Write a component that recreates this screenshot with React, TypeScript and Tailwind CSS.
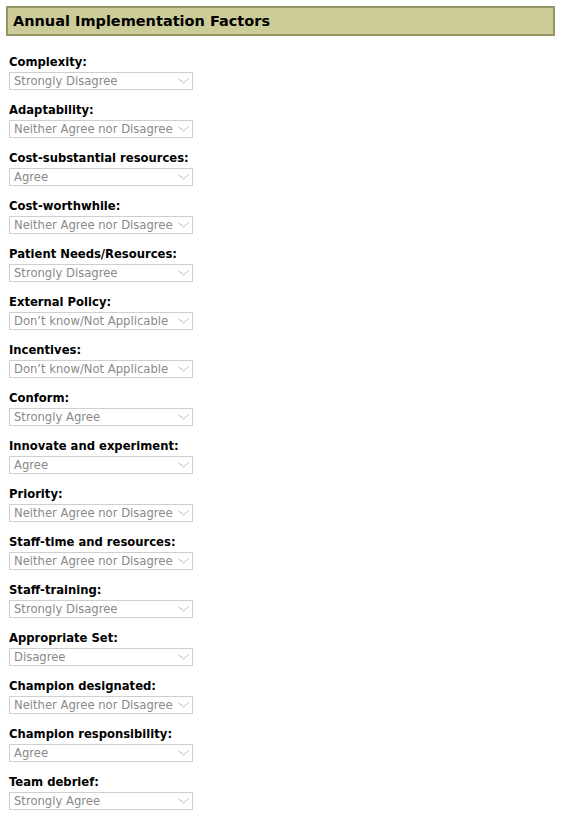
import React from 'react';

const factors = [
  { label: 'Complexity:', value: 'Strongly Disagree' },
  { label: 'Adaptability:', value: 'Neither Agree nor Disagree' },
  { label: 'Cost-substantial resources:', value: 'Agree' },
  { label: 'Cost-worthwhile:', value: 'Neither Agree nor Disagree' },
  { label: 'Patient Needs/Resources:', value: 'Strongly Disagree' },
  { label: 'External Policy:', value: 'Don\u2019t know/Not Applicable' },
  { label: 'Incentives:', value: 'Don\u2019t know/Not Applicable' },
  { label: 'Conform:', value: 'Strongly Agree' },
  { label: 'Innovate and experiment:', value: 'Agree' },
  { label: 'Priority:', value: 'Neither Agree nor Disagree' },
  { label: 'Staff-time and resources:', value: 'Neither Agree nor Disagree' },
  { label: 'Staff-training:', value: 'Strongly Disagree' },
  { label: 'Appropriate Set:', value: 'Disagree' },
  { label: 'Champion designated:', value: 'Neither Agree nor Disagree' },
  { label: 'Champion responsibility:', value: 'Agree' },
  { label: 'Team debrief:', value: 'Strongly Agree' },
];

const Chevron = () => (
  <svg width="11" height="6" viewBox="0 0 11 6" className="shrink-0">
    <path d="M0.5 0.5 L5.5 5 L10.5 0.5" fill="none" stroke="#b8b8b8" strokeWidth="1" />
  </svg>
);

const App = () => {
  return (
    <div className="w-[561px] min-h-[824px] bg-white pt-[6px] font-['DejaVu_Sans',Verdana,sans-serif] text-black">
      {/* Section header */}
      <div className="mx-[6px] h-[30px] border-2 border-[#959565] bg-[#cccc99] pl-[5px] flex items-center">
        <h2 className="text-[14.5px] font-bold leading-[18px]">Annual Implementation Factors</h2>
      </div>

      {/* Form */}
      <div className="pl-[9px] pt-[18px] flex flex-col gap-[12px]">
        {factors.map(f => (
          <div key={f.label} className="flex flex-col gap-[2px]">
            <label className="text-[11.6px] font-bold leading-[16px] h-[16px]">{f.label}</label>
            <div className="w-[184px] h-[18px] border border-[#cfcfcf] bg-white flex items-center justify-between pl-[4px] pr-[3px]">
              <span className="text-[11.6px] leading-[16px] text-[#8a8a8a] whitespace-nowrap">{f.value}</span>
              <Chevron />
            </div>
          </div>
        ))}
      </div>
    </div>
  );
};

export default App;
